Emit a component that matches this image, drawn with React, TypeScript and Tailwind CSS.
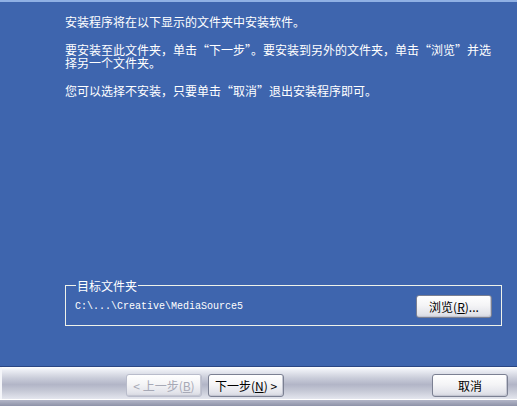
import React from "react";

const font = { fontFamily: '"Noto Sans CJK SC", "Liberation Sans", sans-serif' };

function Btn({
  children,
  disabled,
}: {
  children: React.ReactNode;
  disabled?: boolean;
}) {
  return (
    <div
      className={
        "flex h-[23px] w-[76px] items-center justify-center rounded-[3px] border text-[12px] leading-none bg-[linear-gradient(to_bottom,#ffffff_0%,#f4f4f6_45%,#e2e3ea_85%,#d3d5de_100%)] shadow-[inset_-1px_-1px_0_#c4c6d2] " +
        (disabled
          ? "border-[#b9bccb] text-[#a7a9b6]"
          : "border-[#7b8092] text-black")
      }
    >
      {children}
    </div>
  );
}

export default function App() {
  return (
    <div className="flex h-[406px] w-[517px] flex-col overflow-hidden" style={font}>
      {/* Blue content area */}
      <div className="flex h-[366px] shrink-0 flex-col border-t-2 border-[#8fb0e4] bg-[#3e65ae]">
        <div className="pl-[65px] pr-[12px] pt-[13px] text-[12px] leading-[13px] text-white">
          <p>安装程序将在以下显示的文件夹中安装软件。</p>
          <p className="mt-[15px]">
            要安装至此文件夹，单击“下一步”。要安装到另外的文件夹，单击“浏览”并选
            <br />
            择另一个文件夹。
          </p>
          <p className="mt-[15px]">您可以选择不安装，只要单击“取消”退出安装程序即可。</p>
        </div>
        <div className="flex-1" />
        <fieldset className="mb-[40px] ml-[65px] h-[47px] w-[437px] shrink-0 border border-[#eef2ea] px-[9px]">
          <legend className="ml-[1px] px-[1px] text-[12px] leading-[13px] text-white">目标文件夹</legend>
          <div className="flex items-center justify-between pt-[3px]">
            <span
              className="text-[10px] text-white"
              style={{ fontFamily: '"Liberation Mono", monospace' }}
            >
              C:\...\Creative\MediaSource5
            </span>
            <Btn>
              浏览(<span className="underline">R</span>)...
            </Btn>
          </div>
        </fieldset>
      </div>
      {/* Bottom bar */}
      <div className="h-[1px] shrink-0 bg-[#2a4683]" />
      <div className="flex h-[32px] shrink-0 items-start border-l-2 border-l-[#f4f5f9] bg-[linear-gradient(to_bottom,#ffffff_0%,#eceef4_10%,#c9ccd9_35%,#b2b5c7_55%,#c6c9d6_75%,#e4e6ee_100%)] pl-[124px] pr-[9px] pt-[7px]">
        <div className="flex gap-[6px]">
          <Btn disabled>
            &lt;&nbsp;上一步(<span className="underline">B</span>)
          </Btn>
          <Btn>
            下一步(<span className="underline">N</span>)&nbsp;&gt;
          </Btn>
        </div>
        <div className="flex-1" />
        <Btn>取消</Btn>
      </div>
      <div className="h-[1px] shrink-0 bg-white" />
      <div className="h-[6px] shrink-0 bg-[linear-gradient(to_bottom,#b3b6c8,#8e92a8)]" />
    </div>
  );
}
